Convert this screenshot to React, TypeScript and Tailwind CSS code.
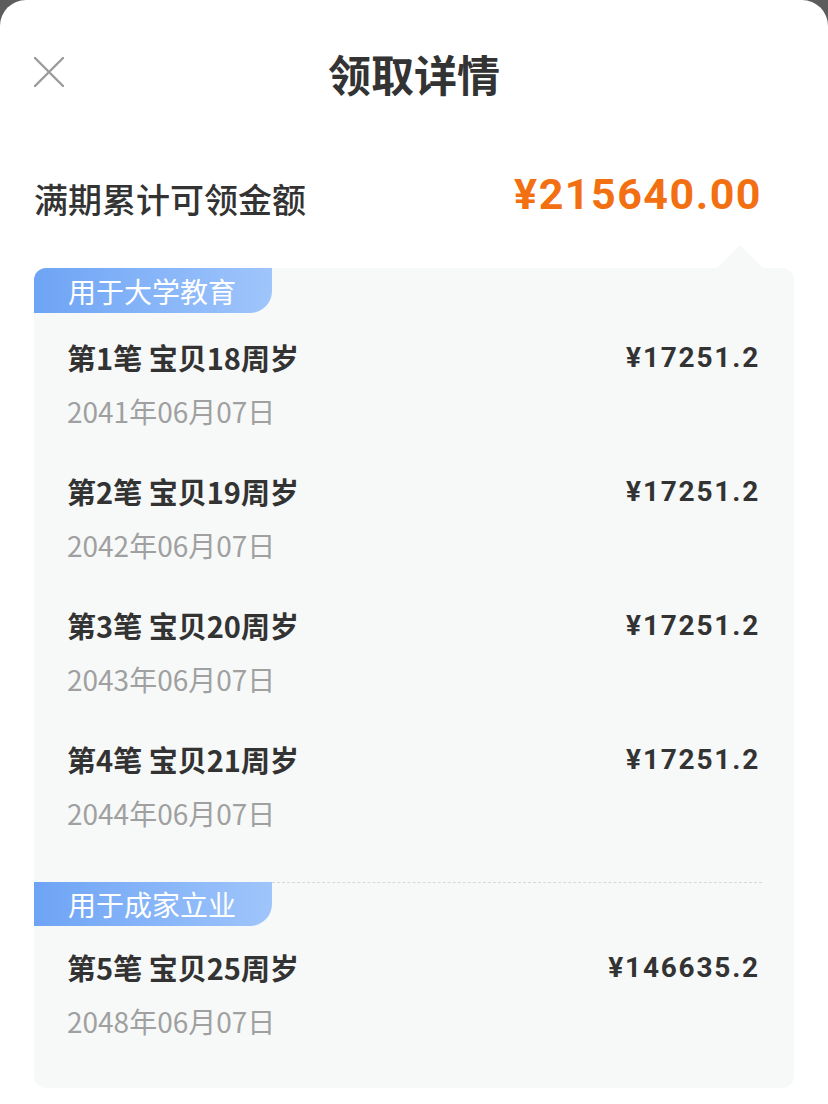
import React from "react";

const font = { fontFamily: '"Noto Sans CJK SC", "Noto Sans", sans-serif' };
const numFont = { fontFamily: 'Roboto, "Noto Sans", sans-serif' };

type Row = { idx: number; age: number; date: string; amount: string };

const edu: Row[] = [
  { idx: 1, age: 18, date: "2041年06月07日", amount: "¥17251.2" },
  { idx: 2, age: 19, date: "2042年06月07日", amount: "¥17251.2" },
  { idx: 3, age: 20, date: "2043年06月07日", amount: "¥17251.2" },
  { idx: 4, age: 21, date: "2044年06月07日", amount: "¥17251.2" },
];

function Item({ r, top }: { r: Row; top: string }) {
  return (
    <div className={`flex flex-col h-[134px] pl-[33px] pr-[34px] ${top}`}>
      <div className="flex items-center justify-between h-[40px]">
        <span className="text-[29px] font-bold text-[#333333]">
          第{r.idx}笔 宝贝{r.age}周岁
        </span>
        <span
          style={numFont}
          className="text-[28px] font-bold text-[#333333] tracking-[1.8px]"
        >
          {r.amount}
        </span>
      </div>
      <div className="mt-[15px] h-[36px] leading-[36px] text-[28px] text-[#a0a0a0]">
        {r.date}
      </div>
    </div>
  );
}

export default function App() {
  return (
    <div style={font} className="w-[828px] h-[1104px] bg-[#5c5c5c] overflow-hidden">
      <div className="w-full h-full bg-white rounded-t-[26px] flex flex-col">
        <div className="relative h-[146px] flex items-center justify-center">
          <svg
            className="absolute left-[34px] top-[57px]"
            width="30"
            height="30"
            viewBox="0 0 30 30"
          >
            <path d="M1 1 L29 29 M29 1 L1 29" stroke="#9b9b9b" strokeWidth="2.4" strokeLinecap="round" />
          </svg>
          <span className="text-[43px] font-bold text-[#333333]">领取详情</span>
        </div>
        <div className="flex items-center justify-between pl-[34px] pr-[66px] h-[100px] -mt-[2px]">
          <span className="text-[34px] font-medium text-[#333333] mt-[8px]">满期累计可领金额</span>
          <span
            style={numFont}
            className="text-[43px] font-bold text-[#f26f12] tracking-[1.5px]"
          >
            ¥215640.00
          </span>
        </div>
        <div className="relative mx-[34px] mt-[24px] bg-[#f7f9f9] rounded-[12px] h-[820px] flex flex-col">
          <div className="absolute right-[31px] -top-[23px] w-0 h-0 border-l-[23px] border-r-[23px] border-b-[23px] border-l-transparent border-r-transparent border-b-[#f7f9f9]" />
          <div className="flex">
            <div className="h-[45px] w-[238px] rounded-tl-[12px] rounded-br-[22px] bg-gradient-to-r from-[#6ea4f5] to-[#9fc5fb] flex items-center pl-[34px] text-[28px] text-white">
              用于大学教育
            </div>
          </div>
          {edu.map((r) => (
            <Item key={r.idx} r={r} top="pt-[25px]" />
          ))}
          <div className="flex mt-[33px]">
            <div className="h-[44px] w-[238px] rounded-br-[22px] bg-gradient-to-r from-[#6ea4f5] to-[#9fc5fb] flex items-center pl-[34px] text-[28px] text-white">
              用于成家立业
            </div>
            <div className="flex-1 border-t border-dashed border-[#d6d9db] mr-[32px]" />
          </div>
          <Item
            r={{ idx: 5, age: 25, date: "2048年06月07日", amount: "¥146635.2" }}
            top="pt-[22px]"
          />
        </div>
      </div>
    </div>
  );
}
